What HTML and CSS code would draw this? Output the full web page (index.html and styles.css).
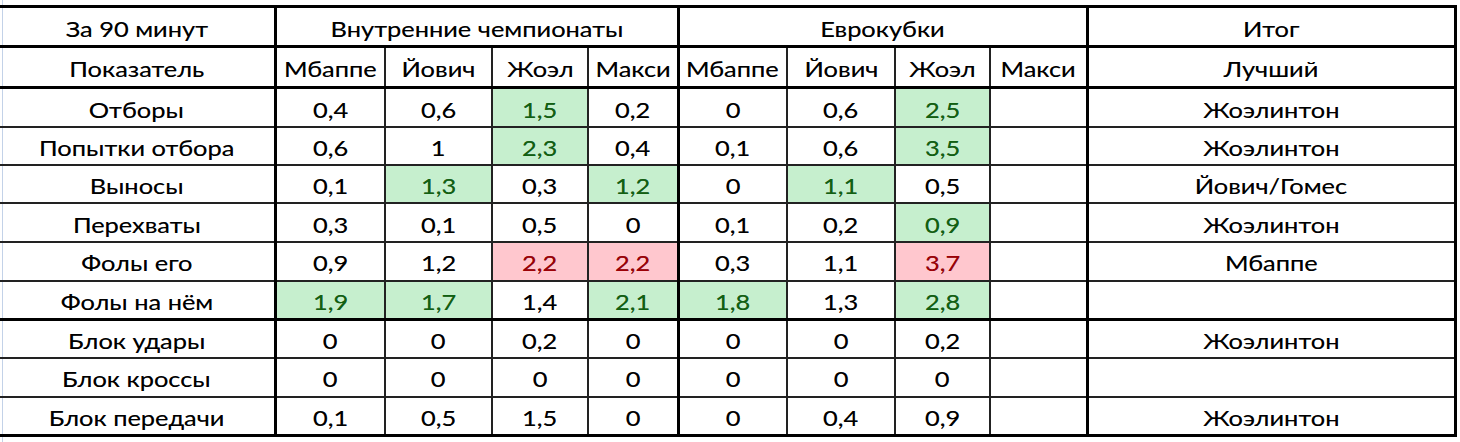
FILE: index.html
```html
<!DOCTYPE html>
<html lang="ru">
<head>
<meta charset="utf-8">
<title>За 90 минут</title>
<link rel="stylesheet" href="styles.css">
</head>
<body>
<table class="sheet">
  <colgroup>
    <col class="c-label"><col class="c-1"><col class="c-2"><col class="c-3"><col class="c-4">
    <col class="c-5"><col class="c-6"><col class="c-7"><col class="c-8"><col class="c-res">
  </colgroup>
  <tr class="r-h1 thick-top thick-bottom">
    <td><span class="t">За 90 минут</span></td>
    <td colspan="4" class="gl"><span class="t">Внутренние чемпионаты</span></td>
    <td colspan="4" class="gl"><span class="t">Еврокубки</span></td>
    <td class="gl gr"><span class="t">Итог</span></td>
  </tr>
  <tr class="r-h2 thick-bottom">
    <td><span class="t">Показатель</span></td>
    <td class="gl"><span class="t">Мбаппе</span></td><td><span class="t">Йович</span></td><td><span class="t">Жоэл</span></td><td><span class="t">Макси</span></td>
    <td class="gl"><span class="t">Мбаппе</span></td><td><span class="t">Йович</span></td><td><span class="t">Жоэл</span></td><td><span class="t">Макси</span></td>
    <td class="gl gr"><span class="t">Лучший</span></td>
  </tr>
  <tr class="r-d r-a">
    <td><span class="t">Отборы</span></td>
    <td class="gl"><span class="t">0,4</span></td><td><span class="t">0,6</span></td><td class="good"><span class="t">1,5</span></td><td><span class="t">0,2</span></td>
    <td class="gl"><span class="t">0</span></td><td><span class="t">0,6</span></td><td class="good"><span class="t">2,5</span></td><td></td>
    <td class="gl gr"><span class="t">Жоэлинтон</span></td>
  </tr>
  <tr class="r-d r-b">
    <td><span class="t">Попытки отбора</span></td>
    <td class="gl"><span class="t">0,6</span></td><td><span class="t">1</span></td><td class="good"><span class="t">2,3</span></td><td><span class="t">0,4</span></td>
    <td class="gl"><span class="t">0,1</span></td><td><span class="t">0,6</span></td><td class="good"><span class="t">3,5</span></td><td></td>
    <td class="gl gr"><span class="t">Жоэлинтон</span></td>
  </tr>
  <tr class="r-d">
    <td><span class="t">Выносы</span></td>
    <td class="gl"><span class="t">0,1</span></td><td class="good"><span class="t">1,3</span></td><td><span class="t">0,3</span></td><td class="good"><span class="t">1,2</span></td>
    <td class="gl"><span class="t">0</span></td><td class="good"><span class="t">1,1</span></td><td><span class="t">0,5</span></td><td></td>
    <td class="gl gr"><span class="t">Йович/Гомес</span></td>
  </tr>
  <tr class="r-d">
    <td><span class="t">Перехваты</span></td>
    <td class="gl"><span class="t">0,3</span></td><td><span class="t">0,1</span></td><td><span class="t">0,5</span></td><td><span class="t">0</span></td>
    <td class="gl"><span class="t">0,1</span></td><td><span class="t">0,2</span></td><td class="good"><span class="t">0,9</span></td><td></td>
    <td class="gl gr"><span class="t">Жоэлинтон</span></td>
  </tr>
  <tr class="r-d">
    <td><span class="t">Фолы его</span></td>
    <td class="gl"><span class="t">0,9</span></td><td><span class="t">1,2</span></td><td class="bad"><span class="t">2,2</span></td><td class="bad"><span class="t">2,2</span></td>
    <td class="gl"><span class="t">0,3</span></td><td><span class="t">1,1</span></td><td class="bad"><span class="t">3,7</span></td><td></td>
    <td class="gl gr"><span class="t">Мбаппе</span></td>
  </tr>
  <tr class="r-d thick-bottom">
    <td><span class="t">Фолы на нём</span></td>
    <td class="gl good"><span class="t">1,9</span></td><td class="good"><span class="t">1,7</span></td><td><span class="t">1,4</span></td><td class="good"><span class="t">2,1</span></td>
    <td class="gl good"><span class="t">1,8</span></td><td><span class="t">1,3</span></td><td class="good"><span class="t">2,8</span></td><td></td>
    <td class="gl gr"></td>
  </tr>
  <tr class="r-d">
    <td><span class="t">Блок удары</span></td>
    <td class="gl"><span class="t">0</span></td><td><span class="t">0</span></td><td><span class="t">0,2</span></td><td><span class="t">0</span></td>
    <td class="gl"><span class="t">0</span></td><td><span class="t">0</span></td><td><span class="t">0,2</span></td><td></td>
    <td class="gl gr"><span class="t">Жоэлинтон</span></td>
  </tr>
  <tr class="r-d">
    <td><span class="t">Блок кроссы</span></td>
    <td class="gl"><span class="t">0</span></td><td><span class="t">0</span></td><td><span class="t">0</span></td><td><span class="t">0</span></td>
    <td class="gl"><span class="t">0</span></td><td><span class="t">0</span></td><td><span class="t">0</span></td><td></td>
    <td class="gl gr"></td>
  </tr>
  <tr class="r-d thick-bottom">
    <td><span class="t">Блок передачи</span></td>
    <td class="gl"><span class="t">0,1</span></td><td><span class="t">0,5</span></td><td><span class="t">1,5</span></td><td><span class="t">0</span></td>
    <td class="gl"><span class="t">0</span></td><td><span class="t">0,4</span></td><td><span class="t">0,9</span></td><td></td>
    <td class="gl gr"><span class="t">Жоэлинтон</span></td>
  </tr>
</table>
</body>
</html>
```

FILE: styles.css
```css
html, body {
  margin: 0;
  padding: 0;
}
body {
  width: 1460px;
  height: 442px;
  overflow: hidden;
  background: linear-gradient(to right, #ffffff 2px, #c3d2e8 2px, #c3d2e8 3px, #ffffff 3px);
}
.sheet {
  border-collapse: collapse;
  table-layout: fixed;
  width: 1456px;
  margin-top: 5px;
  font-family: Lato, "Open Sans", "Liberation Sans", sans-serif;
  font-size: 21px;
  color: #000;
}
.c-label { width: 275px; }
.c-1 { width: 110px; }
.c-2 { width: 107px; }
.c-3 { width: 96px; }
.c-4 { width: 90px; }
.c-5 { width: 109px; }
.c-6 { width: 108px; }
.c-7 { width: 95px; }
.c-8 { width: 97px; }
.c-res { width: 368px; }

.sheet td {
  border: 2px solid #222;
  padding: 3px 0 0;
  text-align: center;
  vertical-align: middle;
  white-space: nowrap;
  overflow: visible;
}
.sheet td:first-child {
  border-left: none;
}
.r-h1 { height: 40px; }
.r-h2 { height: 41px; }
.r-d { height: 38.7px; }
.r-a { height: 39.5px; }
.r-b { height: 37.5px; }

.thick-top td { border-top: 3px solid #000; }
.thick-bottom td { border-bottom: 3px solid #000; }
.sheet td.gl { border-left: 3px solid #000; }
.sheet td.gr { border-right: 3px solid #000; }

.t {
  display: inline-block;
  transform: scaleX(1.21);
  text-shadow: 0 0 0.5px rgba(0, 0, 0, 0.5);
}
.good {
  background: #c6efce;
  color: #116111;
}
.bad {
  background: #ffc7ce;
  color: #9c0006;
}
```
